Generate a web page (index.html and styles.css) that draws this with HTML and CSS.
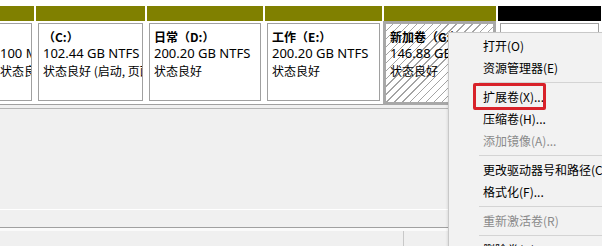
FILE: index.html
```html
<!DOCTYPE html>
<html lang="zh-CN">
<head>
<meta charset="utf-8">
<link rel="stylesheet" href="styles.css">
</head>
<body>
<div class="disk-row">
  <div class="part w1">
    <div class="bar olive"></div>
    <div class="body">
      <div class="box first">
        <div class="ln">&nbsp;</div>
        <div class="ln size">100 MB NTFS</div>
        <div class="ln">状态良好 (系统, 活动, 主分区)</div>
      </div>
    </div>
  </div>
  <div class="part wc">
    <div class="bar olive"></div>
    <div class="body">
      <div class="box">
        <div class="ln b">（C:）</div>
        <div class="ln size">102.44 GB NTFS</div>
        <div class="ln">状态良好 (启动, 页面文件, 故障转储, 主分区)</div>
      </div>
    </div>
  </div>
  <div class="part wd">
    <div class="bar olive"></div>
    <div class="body">
      <div class="box">
        <div class="ln b">日常（D:）</div>
        <div class="ln size">200.20 GB NTFS</div>
        <div class="ln">状态良好</div>
      </div>
    </div>
  </div>
  <div class="part we">
    <div class="bar olive"></div>
    <div class="body">
      <div class="box">
        <div class="ln b">工作（E:）</div>
        <div class="ln size">200.20 GB NTFS</div>
        <div class="ln">状态良好</div>
      </div>
    </div>
  </div>
  <div class="part wg">
    <div class="bar olive"></div>
    <div class="body sel">
      <div class="box hatch">
        <div class="ln b">新加卷（G:）</div>
        <div class="ln size">146.88 GB NTFS</div>
        <div class="ln">状态良好</div>
      </div>
    </div>
  </div>
  <div class="part wu">
    <div class="bar black"></div>
    <div class="body">
      <div class="box">
        <div class="ln">&nbsp;</div>
        <div class="ln">&nbsp;</div>
        <div class="ln">&nbsp;</div>
      </div>
    </div>
  </div>
</div>
<div class="gap-line"></div>
<div class="lower"></div>
<div class="divider"></div>
<div class="status">
  <div class="pane main"></div>
  <div class="pane"></div>
</div>

<div class="menu">
  <div class="item">打开(O)</div>
  <div class="item">资源管理器(E)</div>
  <div class="sep"></div>
  <div class="item">扩展卷(X)...</div>
  <div class="item">压缩卷(H)...</div>
  <div class="item dis">添加镜像(A)...</div>
  <div class="sep"></div>
  <div class="item">更改驱动器号和路径(C)...</div>
  <div class="item">格式化(F)...</div>
  <div class="sep"></div>
  <div class="item dis">重新激活卷(R)</div>
  <div class="sep"></div>
  <div class="item">删除卷(D)...</div>
</div>
<div class="mark"></div>
</body>
</html>
```

FILE: styles.css
```css
html, body {
  margin: 0;
  padding: 0;
}
body {
  width: 602px;
  height: 246px;
  overflow: hidden;
  background: #f0f0f0;
  font-family: "Noto Sans CJK SC", "Noto Sans", sans-serif;
  font-size: 12px;
  color: #000;
  position: relative;
}
.disk-row {
  display: flex;
  background: #fff;
  padding-top: 6px;
  padding-bottom: 1px;
  border-bottom: 1px solid #a0a0a0;
  height: 97px;
}
.part {
  display: flex;
  flex-direction: column;
  padding: 0 1px;
  box-sizing: border-box;
  flex: none;
}
.w1 { width: 35px; padding-left: 0; }
.wc { width: 111px; }
.wd { width: 118px; }
.we { width: 119px; }
.wg { width: 114px; }
.wu { width: 105px; }
.bar {
  height: 15px;
  flex: none;
}
.olive { background: #808000; }
.black { background: #000; }
.body {
  flex: 1;
  padding: 2px;
  display: flex;
}
.w1 .body { padding-left: 0; }
.box {
  flex: 1;
  border: 1px solid #a0a0a0;
  background: #fff;
  padding: 4px 4px 2px;
  overflow: hidden;
  min-width: 0;
}
.box.first {
  border-left: none;
  padding-left: 0;
}
.ln {
  line-height: 17px;
  white-space: nowrap;
}
.ln.size {
  font-family: "Noto Sans", "Noto Sans CJK SC", sans-serif;
  font-size: 13px;
}
.b { font-weight: bold; }
.body.sel {
  background: #a8a8a8;
  padding: 2px;
  margin: 0 0 -2px -1px;
}
.box.hatch {
  border-color: #a8a8a8;
  background: repeating-linear-gradient(135deg, #fff 0, #fff 4.6px, #a4a4a4 4.6px, #a4a4a4 5.6px);
}
.gap-line {
  height: 3px;
  border-bottom: 1px solid #b4b4b4;
}
.lower {
  height: 100px;
  border-bottom: 1px solid #fff;
}
.divider {
  height: 17px;
  border-bottom: 1px solid #a0a0a0;
}
.status {
  display: flex;
  border-top: 3px solid #fafafa;
  height: 20px;
}
.pane.main {
  width: 403px;
  border-right: 1px solid #c8c8c8;
}
.menu {
  position: absolute;
  left: 448px;
  top: 32px;
  width: 200px;
  height: 240px;
  background: #f2f2f2;
  border: 1px solid #c8c8c8;
  padding-top: 2px;
  box-shadow: -1px 1px 2px rgba(0,0,0,0.08);
}
.item {
  height: 22px;
  line-height: 22px;
  padding-left: 34px;
  white-space: nowrap;
}
.item.dis { color: #8a8a8a; }
.sep {
  height: 1px;
  background: #d4d4d4;
  margin: 3px 0 3px 30px;
}
.mark {
  position: absolute;
  left: 473px;
  top: 83px;
  width: 67px;
  height: 21px;
  border: 3px solid #d8222a;
  border-radius: 2px;
}
```
